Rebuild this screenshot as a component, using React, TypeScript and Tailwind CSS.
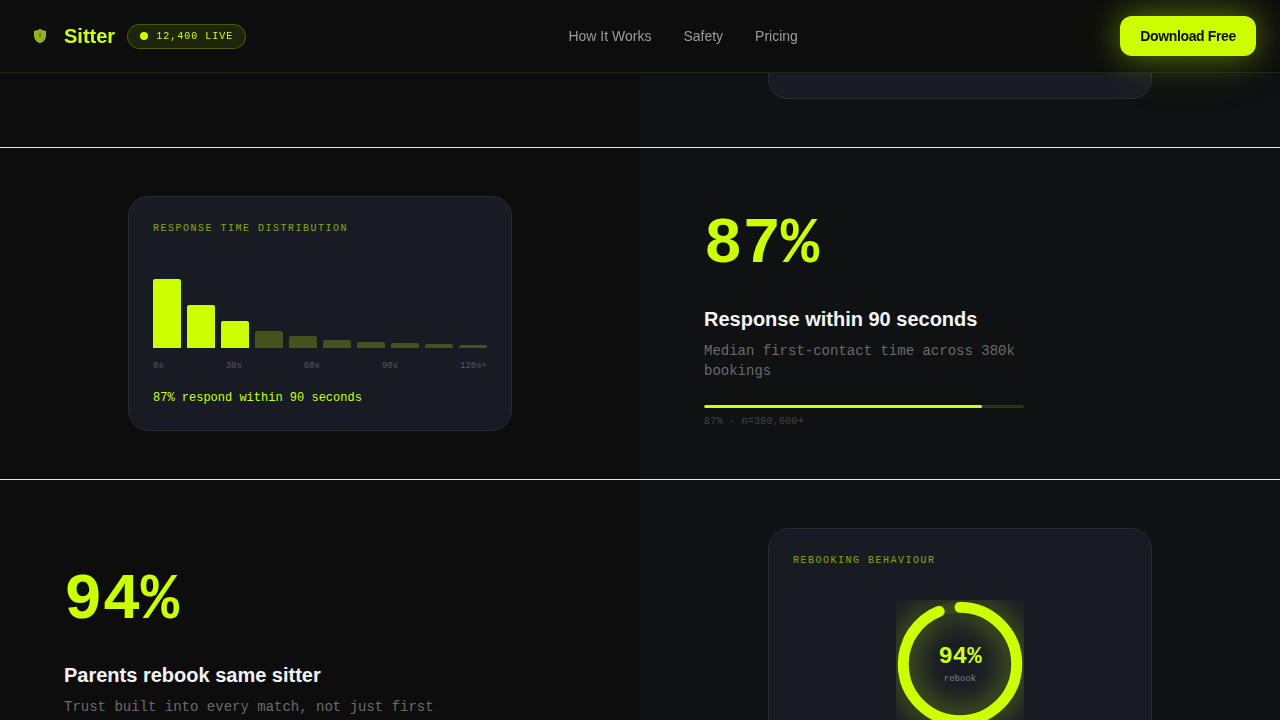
import type { ReactNode } from 'react'

const bars = [
  { height: 69, active: true },
  { height: 43, active: true },
  { height: 27, active: true },
  { height: 17, active: false },
  { height: 12, active: false },
  { height: 8, active: false },
  { height: 6, active: false },
  { height: 5, active: false },
  { height: 4, active: false },
  { height: 3, active: false },
]

const ticks = ['0s', '30s', '60s', '90s', '120s+']

const mono = "font-['Liberation_Mono',monospace]"

function ShieldIcon() {
  return (
    <svg width="14" height="16" viewBox="0 0 14 16" aria-hidden="true">
      <path d="M7 .7C5.200 2.100 3.200 2.700 1 2.800v4.700c0 3.600 2.200 6.200 6 7.800 3.800-1.600 6-4.200 6-7.800V2.800C10.800 2.700 8.800 2.100 7 .7z" fill="#9fbd22" />
      <path d="M7 2.600C5.700 3.500 4.300 4 2.700 4.200v3.500c0 2.600 1.500 4.500 4.300 5.800 2.800-1.300 4.300-3.200 4.300-5.800V4.200C9.700 4 8.300 3.500 7 2.600z" fill="#96b31f" stroke="#83992a" strokeWidth=".6" />
      <path d="M7 5v4.500" stroke="#5c6d18" strokeWidth="1.300" />
    </svg>
  )
}

function Header() {
  return (
    <header className="fixed inset-x-0 top-0 z-10 flex items-center justify-between border-b border-[#ccff00]/10 bg-[#0d0d0d] px-6 py-4">
      <div className="flex items-center gap-3">
        <a href="#top" className="flex items-center gap-2">
          <span className="flex h-8 w-8 items-center justify-center">
            <ShieldIcon />
          </span>
          <span className="text-xl font-bold text-[#ccff1a]">Sitter</span>
        </a>
        <div className={`${mono} flex items-center gap-2 rounded-full border border-[#ccff00]/25 bg-[#ccff00]/10 px-3 py-1`}>
          <span className="h-2 w-2 rounded-full bg-[#ccff00]" />
          <span className="text-[10px] leading-[15px] tracking-widest text-[#ccff1a]">12,400 LIVE</span>
        </div>
      </div>
      <nav className="flex gap-8 text-sm text-[#9b9b9b]">
        <a href="#how">How It Works</a>
        <a href="#safety">Safety</a>
        <a href="#pricing">Pricing</a>
      </nav>
      <button
        type="button"
        className="h-10 rounded-xl bg-[#ccff00] px-5 text-sm font-bold tracking-tight text-[#0d0d0d] shadow-[0_0_32px_rgba(204,255,0,0.4),0_0_64px_rgba(204,255,0,0.12)]"
      >
        Download Free
      </button>
    </header>
  )
}

function Row({ left, right }: { left?: ReactNode; right?: ReactNode }) {
  return (
    <section className="grid grid-cols-2 border-b border-gray-200">
      <div className="flex flex-col justify-center bg-[#0d0d0d]">{left}</div>
      <div className="flex flex-col justify-center bg-[#0f1112]">{right}</div>
    </section>
  )
}

function Card({ title, children }: { title: string; children: ReactNode }) {
  return (
    <div className="px-16 py-12">
      <div className={`${mono} mx-auto max-w-96 rounded-[20px] border border-[#272c28] bg-[#181b24] p-6`}>
        <p className="text-[10px] leading-[15px] tracking-[0.15em] text-[#ccff00]/60 uppercase">{title}</p>
        {children}
      </div>
    </div>
  )
}

type StatProps = { value: number; title: string; text: string; sample: string }

function Stat({ value, title, text, sample }: StatProps) {
  return (
    <div className="px-16">
      <p className={`${mono} text-[64px] leading-[92px] font-bold text-[#ccff00]`}>{value}%</p>
      <h2 className="mt-3.5 text-xl leading-7 font-bold text-[#f5f5f5]">{title}</h2>
      <p className={`${mono} mt-2 max-w-96 text-sm leading-5 text-[#6b6b6b]`}>{text}</p>
      <div className="mt-6 h-[3px] max-w-80 overflow-hidden rounded-full bg-[#ccff00]/15">
        <div className="h-full rounded-full bg-[#ccff1a]" style={{ width: `${value}%` }} />
      </div>
      <p className={`${mono} mt-1.5 text-[10px] leading-[15px] tracking-wide text-[#454545]`}>
        {value}% · n={sample}
      </p>
    </div>
  )
}

function ResponseChart() {
  return (
    <>
      <div className="mt-4 flex h-24 items-end gap-1.5">
        {bars.map((bar, i) => (
          <div
            key={i}
            className={`flex-1 rounded-t-[2px] ${bar.active ? 'bg-[#ccff00]' : 'bg-[#46521e]'}`}
            style={{ height: bar.height }}
          />
        ))}
      </div>
      <div className="mt-3 flex justify-between text-[9px] leading-3 text-[#555961]">
        {ticks.map(t => <span key={t}>{t}</span>)}
      </div>
      <p className="mt-4.5 text-xs leading-4 text-[#ccff1a]">87% respond within 90 seconds</p>
    </>
  )
}

function RebookRing() {
  return (
    <>
      <div className="relative mx-auto mt-8 h-32 w-32">
        <svg className="h-32 w-32 -rotate-90 overflow-hidden" viewBox="0 0 140 140" aria-hidden="true">
          <circle cx="70" cy="70" r="62" fill="none" stroke="#ccff00" strokeOpacity=".08" strokeWidth="12" />
          <circle
            className="drop-shadow-[0_0_16px_rgba(204,255,0,0.6)]"
            cx="70"
            cy="70"
            r="62"
            fill="none"
            stroke="#ccff00"
            strokeWidth="12"
            strokeLinecap="round"
            pathLength="100"
            strokeDasharray="94 100"
          />
        </svg>
        <div className="absolute inset-0 flex flex-col items-center justify-center pb-0.5">
          <span className="text-2xl leading-8 font-bold text-[#ccff1a]">94%</span>
          <span className="text-[9px] leading-3 text-[#7b7f88]">rebook</span>
        </div>
      </div>
      <p className="mt-10 text-center text-xs leading-[18px] text-[#ccff1a]">94% rebook</p>
    </>
  )
}

export default function App() {
  return (
    <div id="top" className="min-h-screen bg-[#0d0d0d] font-['Liberation_Sans',sans-serif]">
      <Header />
      <main>
        <Row
          right={
            <div className="px-16 pb-12">
              <div className="mx-auto h-[99px] max-w-96 rounded-b-[20px] border border-t-0 border-[#272c28] bg-[#181b24]" />
            </div>
          }
        />
        <Row
          left={<Card title="Response time distribution"><ResponseChart /></Card>}
          right={
            <Stat
              value={87}
              title="Response within 90 seconds"
              text="Median first-contact time across 380k bookings"
              sample="380,000+"
            />
          }
        />
        <Row
          left={
            <Stat
              value={94}
              title="Parents rebook same sitter"
              text="Trust built into every match, not just first bookings"
              sample="380,000+"
            />
          }
          right={<Card title="Rebooking behaviour"><RebookRing /></Card>}
        />
      </main>
    </div>
  )
}
